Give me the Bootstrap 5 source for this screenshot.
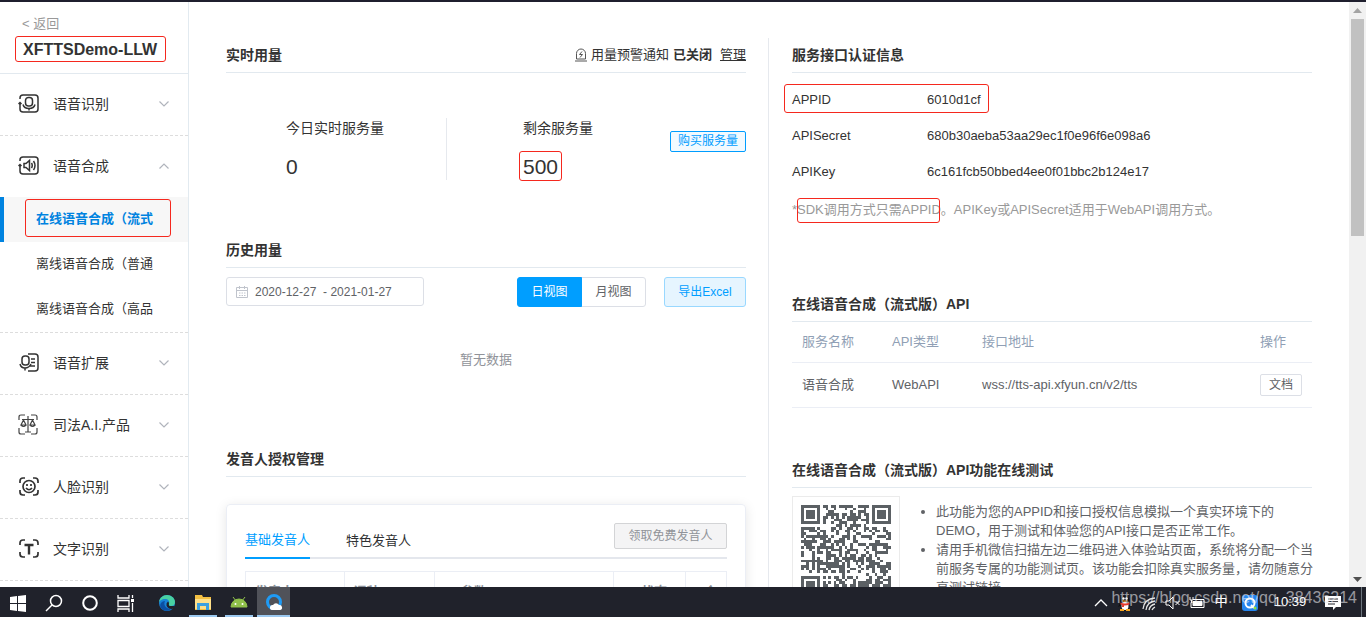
<!DOCTYPE html>
<html lang="zh-CN">
<head>
<meta charset="utf-8">
<meta name="viewport" content="width=device-width, initial-scale=1">
<title>XFTTSDemo-LLW</title>
<link href="https://cdn.jsdelivr.net/npm/bootstrap@5.3.0/dist/css/bootstrap.min.css" rel="stylesheet">
<style>
body{font-family:"Liberation Sans","Noto Sans CJK SC",sans-serif;font-size:13px;line-height:20px;color:#333;border-top:2px solid #1f1f2e;background:#fff}
a{color:inherit}
.work{min-height:0}
.side{width:189px;border-right:1px solid #e2eaf0}
.side-head{height:72px;padding:12px 0 0 15px;border-bottom:1px solid #e2e9ef}
.side-head a{color:#999;padding-left:7px}
.mark-box{position:relative}
.mark-box::after{content:"";position:absolute;border:1px solid #f5281e;border-radius:3px;pointer-events:none;inset:var(--inset,0)}
.app-name{--inset:0;font-size:16px;line-height:24px;font-weight:700;padding:2px 9px 0 8px;margin:2px 0 0}
.side-group{border-bottom:1px dashed #ddd}
.side-item{height:61px;padding:0 19px 2px 18px;font-size:14px;border:0;background:none;color:#333}
.side-item .ico{width:22px;height:22px;margin-right:13px}
.side-item .chev{width:10px;height:6px;margin-left:auto}
.sub-item{height:45px;padding-left:36px;line-height:44px}
.sub-item.current{background:#f7f7f7;border-left:4px solid #0083e0;padding-left:32px;color:#0083e0;font-weight:700}
.sub-item.current{--inset:2px 17px 5px 21px}
.col-left{padding:43px 23px 0 37px}
.col-right{padding:43px 36px 0 23px}
.rule-left{border-left:1px solid #e6e9ee;margin:36px 0 0 -1px;padding-top:7px}
.sec-title{font-size:14px;line-height:20px;font-weight:700;padding-bottom:7px;margin:0;border-bottom:1px solid #e2e9ef}
.alert-set{font-weight:400;font-size:13px}
.stats{margin:45px 0 60px}
.stat-a{flex:0 0 42.5%;padding-left:60px;border-right:1px solid #e6e9ee}
.stat-b{padding-left:76px}
.stat-label{font-size:14px}
.stat-num{font-size:21px;line-height:26px;margin-top:16px}
.stat-num .mark-box{--inset:-3px -4px -1px -4px}
.btn-buy{font-size:12px;line-height:19px;padding:0 7px;margin-top:13px;border:1px solid #009dff;border-radius:2px;color:#009dff;background:#f2faff}
.filters{margin-top:9px}
.date-box{width:198px;height:29px;border:1px solid #dcdfe6;border-radius:3px;padding:0 9px}
.date-box input{border:0;padding:0;width:150px;font-size:12px;color:#606266;background:none}
.date-box svg{width:12px;height:12px;margin-right:7px}
.btn-view{font-size:12px;height:30px;width:65px;padding:0;border:1px solid #dcdfe6;border-radius:3px;color:#606266}
.btn-view.active,.btn-view.active:hover{background:#009eff;border-color:#009eff;color:#fff}
.btn-export{font-size:12px;height:30px;width:82px;padding:0;margin-left:18px;border:1px solid #99d8ff;border-radius:3px;color:#009eff;background:#e6f5ff}
.no-data{margin:43px 0 79px;color:#909399}
.voice{margin-top:27px;padding:18px;border:1px solid #ebeef5;border-radius:4px;box-shadow:0 2px 12px rgba(0,0,0,.1)}
.voice-tabs{border-bottom:2px solid #e4e7ed;height:36px;gap:36px}
.voice-tabs button{border:0;background:none;padding:0 0 1px;height:36px;line-height:24px;color:#303133}
.voice-tabs .active{color:#009eff;border-bottom:2px solid #009eff;padding-bottom:0}
.btn-free:disabled{font-size:12px;width:113px;height:26px;padding:0;border:1px solid #d3d4d6;border-radius:2px;color:#909399;background:#f4f4f5;opacity:1}
.voice-table{margin:12px 0 0;table-layout:fixed;border-color:#ebeef5}
.voice-table th{padding:10px 0 10px 9px;color:#8a9099;white-space:nowrap;font-size:13px;overflow:hidden}
.cred{margin:9px 0 10px}
.cred dt,.cred dd{font-weight:400;margin:0;line-height:36px}
.cred dt{flex:0 0 135px}
.cred .mark-box{--inset:2px auto 5px -8px}
.cred .mark-box::after{width:205px}
.tip{color:#999;margin:0 0 74px;white-space:nowrap}
.tip .mark-box{--inset:-2px 1px -3px 0}
.api-table{margin:0 0 52px;border-color:#ebeef5;color:#606266}
.api-table th,.api-table td{padding:0 10px;font-weight:400;vertical-align:middle;color:#606266}
.api-table th{height:40px;color:#909fb5}
.api-table td{height:45px}
.btn-doc{font-size:12px;line-height:20px;width:42px;padding:0;border:1px solid #dcdfe6;border-radius:2px;color:#606266;background:#fff}
.qr-box{width:108px;height:108px;border:1px solid #ebebeb;padding:8px}
.notes{margin:14px -2px 0 0;padding-left:36px;line-height:19px;color:#606266;min-width:0}
.scroller{width:17px;background:#f1f1f1}
.scroller i{width:13px;height:217px;background:#c1c1c1;margin-top:1px}
.scroller svg{width:9px;height:5px;margin:6px 0 5px}
.taskbar{height:30px;background:#20222b;z-index:2}
.task{width:36px;height:30px;padding:0;border:0;background:none}
.task svg{width:18px;height:18px}
.task.app{width:37px}
.task.run{border-bottom:2px solid #9cc9f0;width:28px;margin:0 4px}
.task.front{background:#505259;width:33px;margin:0}
.tray .cell{width:24px}
.tray svg{width:16px;height:16px}
.watermark{right:9px;top:0;font-size:16px;line-height:22px;color:rgba(235,235,240,.6);pointer-events:none}
</style>
</head>
<body class="vh-100 d-flex flex-column overflow-hidden">
<svg width="0" height="0" class="position-absolute" aria-hidden="true">
  <symbol id="down" viewBox="0 0 10 6"><path d="M.5.5 5 5 9.500.5" fill="none" stroke="#b0b4bc" stroke-width="1.200"/></symbol>
  <symbol id="up" viewBox="0 0 10 6"><path d="M.5 5.500 5 1 9.500 5.500" fill="none" stroke="#b0b4bc" stroke-width="1.200"/></symbol>
</svg>
<div class="work flex-grow-1 d-flex overflow-hidden">
  <nav class="side flex-shrink-0">
    <div class="side-head d-flex flex-column align-items-start">
      <a href="#" class="text-decoration-none">&lt; 返回</a>
      <h1 class="app-name mark-box">XFTTSDemo-LLW</h1>
    </div>
    <div class="side-group">
      <button class="side-item d-flex align-items-center w-100">
        <svg class="ico" viewBox="0 0 22 22" fill="none" stroke="#333" stroke-width="1.500"><path d="M2 6V5q0-3 3-3h12q3 0 3 3v11q0 3-3 3H5q-3 0-3-3v-5.500M.5 11 2 9.500 3.500 11"/><rect x="7.500" y="4.500" width="7" height="8.500" rx="3"/><path d="M5 11.500q1 4 6 4t6-4M11 15v2.500"/></svg>
        语音识别<svg class="chev"><use href="#down"/></svg></button>
    </div>
    <div class="side-group">
      <button class="side-item d-flex align-items-center w-100">
        <svg class="ico" viewBox="0 0 22 22" fill="none" stroke="#333" stroke-width="1.500"><path d="M2 6V5q0-3 3-3h12q3 0 3 3v11q0 3-3 3H5q-3 0-3-3v-5.500M.5 11 2 9.500 3.500 11M6 8.500h2L11.500 5.500v10l-3.500-3H6zM13.500 8q1.500 2.500 0 5M15.500 6q3 4.500 0 9"/></svg>
        语音合成<svg class="chev"><use href="#up"/></svg></button>
      <a href="#" class="sub-item current mark-box d-block text-decoration-none">在线语音合成（流式</a>
      <a href="#" class="sub-item d-block text-decoration-none">离线语音合成（普通</a>
      <a href="#" class="sub-item d-block text-decoration-none">离线语音合成（高品</a>
    </div>
    <div class="side-group">
      <button class="side-item d-flex align-items-center w-100">
        <svg class="ico" viewBox="0 0 22 22" fill="none" stroke="#333" stroke-width="1.500"><path d="M10 2h7q3 0 3 3v11q0 3-3 3h-7M13 7h4M13 10.500h4M12 14h5M2 12q1 4 5 4t6-4M7 16v2.500"/><rect x="4" y="4" width="7" height="9" rx="3"/></svg>
        语音扩展<svg class="chev"><use href="#down"/></svg></button>
    </div>
    <div class="side-group">
      <button class="side-item d-flex align-items-center w-100">
        <svg class="ico" viewBox="0 0 22 22" fill="none" stroke="#444" stroke-width="1.200"><path d="M1 6V3q0-2 2-2h4M13 1h4q2 0 2 2v3M1 14v4q0 2 2 2h4M13 20h4q2 0 2-2v-4M10 2v16M7 18h6M4 5.500h12M5.500 6 3 11h5zM14.500 6 12 11h5zM3 11q2.500 3 5 0M12 11q2.500 3 5 0"/></svg>
        司法A.I.产品<svg class="chev"><use href="#down"/></svg></button>
    </div>
    <div class="side-group">
      <button class="side-item d-flex align-items-center w-100">
        <svg class="ico" viewBox="0 0 22 22" fill="none" stroke="#333" stroke-width="1.700"><path d="M2 7V5q0-3 3-3h2M15 2h2q3 0 3 3v2M2 14v2q0 3 3 3h2M15 19h2q3 0 3-3v-2M8 12q3 3.500 6 0M9 8v2M13 8v2"/><circle cx="11" cy="10.500" r="6"/></svg>
        人脸识别<svg class="chev"><use href="#down"/></svg></button>
    </div>
    <div class="side-group">
      <button class="side-item d-flex align-items-center w-100">
        <svg class="ico" viewBox="0 0 22 22" fill="none" stroke="#333" stroke-width="1.700"><path d="M2 7V5q0-3 3-3h2M15 2h2q3 0 3 3v2M2 14v2q0 3 3 3h2M15 19h2q3 0 3-3v-2"/><path d="M6.500 7h9M11 7v9.500" stroke-width="2.400"/></svg>
        文字识别<svg class="chev"><use href="#down"/></svg></button>
    </div>
  </nav>

  <main class="row g-0 flex-grow-1">
    <div class="col-6 col-left">
      <h2 class="sec-title d-flex justify-content-between">实时用量
        <span class="alert-set d-flex align-items-center">
          <svg width="12" height="14" viewBox="0 0 12 14" fill="none" stroke="#555" class="me-1"><path d="M1.500 11V5.500a4.500 4.500 0 0 1 9 0V11zM0 13h12M7 3.500 4.500 6.500h3L5 9.500"/></svg>
          用量预警通知<b class="ms-1 me-2">已关闭</b><a href="#">管理</a></span>
      </h2>
      <div class="stats d-flex">
        <div class="stat-a"><div class="stat-label">今日实时服务量</div><div class="stat-num">0</div></div>
        <div class="stat-b"><div class="stat-label">剩余服务量</div><div class="stat-num"><span class="mark-box d-inline-block">500</span></div></div>
        <button class="btn btn-buy ms-auto align-self-start">购买服务量</button>
      </div>

      <h2 class="sec-title">历史用量</h2>
      <div class="filters d-flex">
        <label class="date-box d-flex align-items-center">
          <svg viewBox="0 0 12 12" fill="none" stroke="#c0c4cc"><path d="M.5 1.500h11v10H.5zM.5 4.500h11M3.500 0v3M8.500 0v3M3 7h1.500M5.500 7H7M8 7h1.500M3 9.500h1.500M5.500 9.500H7M8 9.500h1.500"/></svg>
          <input type="text" aria-label="日期范围" value="2020-12-27  - 2021-01-27">
        </label>
        <div class="btn-group ms-auto">
          <button class="btn btn-view active">日视图</button><button class="btn btn-view">月视图</button>
        </div>
        <button class="btn btn-export">导出Excel</button>
      </div>
      <p class="no-data text-center">暂无数据</p>

      <h2 class="sec-title">发音人授权管理</h2>
      <section class="voice">
        <div class="voice-tabs d-flex">
          <button class="active">基础发音人</button><button>特色发音人</button>
          <span class="ms-auto"><input type="button" class="btn btn-free align-top" value="领取免费发音人" disabled></span>
        </div>
        <table class="voice-table table table-bordered">
          <colgroup><col style="width:20.500%"><col style="width:18.700%"><col style="width:37.300%"><col style="width:15%"><col style="width:8.500%"></colgroup>
          <thead><tr><th>发音人</th><th>语种</th><th class="text-center">参数(vcn/voice_name)</th><th class="text-center">状态</th><th class="text-center">个</th></tr></thead>
        </table>
      </section>
    </div>

    <div class="col-6 col-right rule-left">
      <h2 class="sec-title">服务接口认证信息</h2>
      <dl class="cred">
        <div class="d-flex mark-box"><dt>APPID</dt><dd>6010d1cf</dd></div>
        <div class="d-flex"><dt>APISecret</dt><dd>680b30aeba53aa29ec1f0e96f6e098a6</dd></div>
        <div class="d-flex"><dt>APIKey</dt><dd>6c161fcb50bbed4ee0f01bbc2b124e17</dd></div>
      </dl>
      <p class="tip">*<span class="mark-box d-inline-block">SDK调用方式只需APPID</span>。APIKey或APISecret适用于WebAPI调用方式。</p>

      <h2 class="sec-title">在线语音合成（流式版）API</h2>
      <table class="api-table table">
        <colgroup><col style="width:90px"><col style="width:90px"><col><col style="width:61px"></colgroup>
        <thead><tr><th>服务名称</th><th>API类型</th><th>接口地址</th><th>操作</th></tr></thead>
        <tbody><tr><td class="text-nowrap">语音合成</td><td>WebAPI</td><td>wss://tts-api.xfyun.cn/v2/tts</td><td><button class="btn btn-doc">文档</button></td></tr></tbody>
      </table>

      <h2 class="sec-title">在线语音合成（流式版）API功能在线测试</h2>
      <div class="d-flex">
        <div class="qr-box flex-shrink-0 mt-2"><svg id="qr" class="d-block w-100 h-100" viewBox="0 0 33 33" shape-rendering="crispEdges" role="img" aria-label="二维码"><path fill="#5b6064"/></svg></div>
        <ul class="notes">
          <li>此功能为您的APPID和接口授权信息模拟一个真实环境下的DEMO，用于测试和体验您的API接口是否正常工作。</li>
          <li>请用手机微信扫描左边二维码进入体验站页面，系统将分配一个当前服务专属的功能测试页。该功能会扣除真实服务量，请勿随意分享测试链接。</li>
        </ul>
      </div>
    </div>
  </main>
  <div class="scroller flex-shrink-0 d-flex flex-column align-items-center">
    <svg viewBox="0 0 9 5"><path d="M0 5 4.500 0 9 5z" fill="#a3a3a3"/></svg><i></i>
    <svg class="mt-auto" viewBox="0 0 9 5"><path d="M0 0h9L4.500 5z" fill="#505050"/></svg>
  </div>
</div>

<footer class="taskbar position-relative flex-shrink-0 d-flex align-items-stretch">
  <button class="task" aria-label="开始"><svg viewBox="0 0 18 18" fill="#fff"><path d="M1 3l7-1v7H1zM9 2l8-1v8H9zM1 10h7v7l-7-1zM9 10h8v8l-8-1z"/></svg></button>
  <button class="task" aria-label="搜索"><svg viewBox="0 0 18 18" fill="none" stroke="#fff" stroke-width="1.500"><circle cx="11" cy="7" r="5.500"/><path d="m7 11-6 6"/></svg></button>
  <button class="task" aria-label="Cortana"><svg viewBox="0 0 18 18" fill="none" stroke="#fff" stroke-width="2"><circle cx="9" cy="9" r="6.800"/></svg></button>
  <button class="task me-1" aria-label="任务视图"><svg viewBox="0 0 18 18" fill="none" stroke="#fff" stroke-width="1.300"><path d="M1 1v3h11V1M1 6.500h11v6H1zM1 18v-3h11v3M15.500 1v3M15.500 9v9"/><path d="M15.500 5v3" stroke-width="3"/></svg></button>
  <button class="task app" aria-label="Edge"><svg viewBox="0 0 18 18"><circle cx="9" cy="9" r="8" fill="#1683d8"/><path d="M1 9C1 4 5 1 9 1s8 3 8 7c0 3-2 4-4 4s-3-1-2-2c1-3-1-5-4-5S1 7 1 9" fill="#49d1a2"/><path d="M7 7c-2 4 1 8 6 8-3 3-8 2-10-1S3 7 7 7" fill="#0b4fa3"/><path d="M10 7.500c2 2 0 3 1.500 4.500h5v2.500Q10 16 8.500 11.500 8 9 10 7.500" fill="#20222b"/></svg></button>
  <button class="task app run" aria-label="文件资源管理器"><svg viewBox="0 0 18 18"><path d="M1 2h7l1 2h8v13H1z" fill="#f3c043"/><path d="M1 6h16v10H1z" fill="#ffe08a"/><path d="M3 17v-7h12v7h-3v-4H6v4z" fill="#3da1e0"/></svg></button>
  <button class="task app run" aria-label="Android"><svg viewBox="0 0 18 18"><path d="M1 14a8 8 0 0 1 16 0zM3 4l3 4M15 4l-3 4" fill="#8fc04a" stroke="#8fc04a"/><circle cx="5.500" cy="11" r="1" fill="#fff"/><circle cx="12.500" cy="11" r="1" fill="#fff"/></svg></button>
  <button class="task app run front" aria-label="浏览器"><svg viewBox="0 0 18 18"><circle cx="9" cy="9" r="6.500" fill="none" stroke="#1f9bf5" stroke-width="3"/><path d="M7 17a2.500 2.500 0 0 1 1-5 3.500 3.500 0 0 1 6 0 2.500 2.500 0 0 1 1 5z" fill="#fff"/></svg></button>

  <div class="tray ms-auto d-flex align-items-center text-white text-center">
    <span class="cell"><svg viewBox="0 0 16 16" fill="none" stroke="#fff" stroke-width="1.300"><path d="m2 11 6-6 6 6"/></svg></span>
    <span class="cell"><svg viewBox="0 0 16 16"><ellipse cx="8" cy="8" rx="5" ry="7.500" fill="#111"/><path d="M3 8 1 12l2-1zM13 8l2 4-2-1z" fill="#111"/><ellipse cx="8" cy="11" rx="3.500" ry="4" fill="#fff"/><circle cx="6.500" cy="3.500" r="1.200" fill="#fff"/><circle cx="9.500" cy="3.500" r="1.200" fill="#fff"/><path d="M3.500 7.500q4.500 2 9 0v2q-4.500 2-9 0zM5 9h2v3H5z" fill="#e23a2e"/><path d="M5 5.500h6L8 7zM3 14h4v2H3zM9 14h4v2H9z" fill="#f8a51c"/></svg></span>
    <span class="cell"><svg viewBox="0 0 16 16" fill="none" stroke="#e4e4e4" stroke-width="1.300"><path d="M2 14Q3 4 14 3M5 15q1-8 9-9M8 15q1-5 6-6M11 15q1-2 3-3"/></svg></span>
    <span class="cell"><svg viewBox="0 0 16 16" fill="none" stroke="#fff"><path d="M1 6h3l4-4v12l-4-4H1zM10.500 6l4 4M14.500 6l-4 4"/></svg></span>
    <span class="cell"><svg viewBox="0 0 16 16" fill="none" stroke="#fff"><path d="M4 4.500h11v8H2v-5"/><path d="M6 6.500h7v4H4v-4z" fill="#fff"/><path d="M1 2v3h3V2M2.500 5v3"/></svg></span>
    <span class="cell">中</span>
    <span style="width:34px"><svg viewBox="0 0 16 16"><rect width="16" height="16" rx="3" fill="#2585ee"/><circle cx="8" cy="8" r="4.500" fill="none" stroke="#fff" stroke-width="2"/><path d="m9 10 3 3" stroke="#fff" stroke-width="2"/><circle cx="13" cy="13" r="1.500" fill="#8fe040"/></svg></span>
    <time style="width:46px">10:39</time>
    <span style="width:40px"><svg viewBox="0 0 16 16"><path d="M0 1h16v11h-5l-3 3v-3H0z" fill="#fff"/><path d="M3 4h10M3 6.500h10M3 9h7" stroke="#20222b"/></svg></span>
    <span class="ms-2 border-start border-secondary align-self-stretch" style="width:5px"></span>
  </div>
  <div class="watermark position-absolute">https://blog.csdn.net/qq_38436214</div>
</footer>

<script src="https://cdn.jsdelivr.net/npm/bootstrap@5.3.0/dist/js/bootstrap.bundle.min.js"></script>
<script>
// Fills the 33x33 code grid: three finder squares plus the data modules.
(function () {
  var n = 33, seed = 20210127, d = "";
  function rnd() { seed = (seed * 1103515245 + 12345) % 2147483648; return seed / 2147483648; }
  function finder(x, y) {
    var corners = [[0, 0], [n - 7, 0], [0, n - 7]];
    for (var i = 0; i < 3; i++) {
      var a = x - corners[i][0], b = y - corners[i][1];
      if (a >= -1 && a <= 7 && b >= -1 && b <= 7) {
        var r = Math.max(Math.abs(a - 3), Math.abs(b - 3));
        return r === 3 || r <= 1 ? 1 : 0;
      }
    }
    return -1;
  }
  for (var y = 0; y < n; y++) for (var x = 0; x < n; x++) {
    var f = finder(x, y);
    if (f === 1 || (f < 0 && rnd() < 0.5)) d += "M" + x + " " + y + "h1v1h-1z";
  }
  document.querySelector("#qr path").setAttribute("d", d);
})();
</script>
</body>
</html>
